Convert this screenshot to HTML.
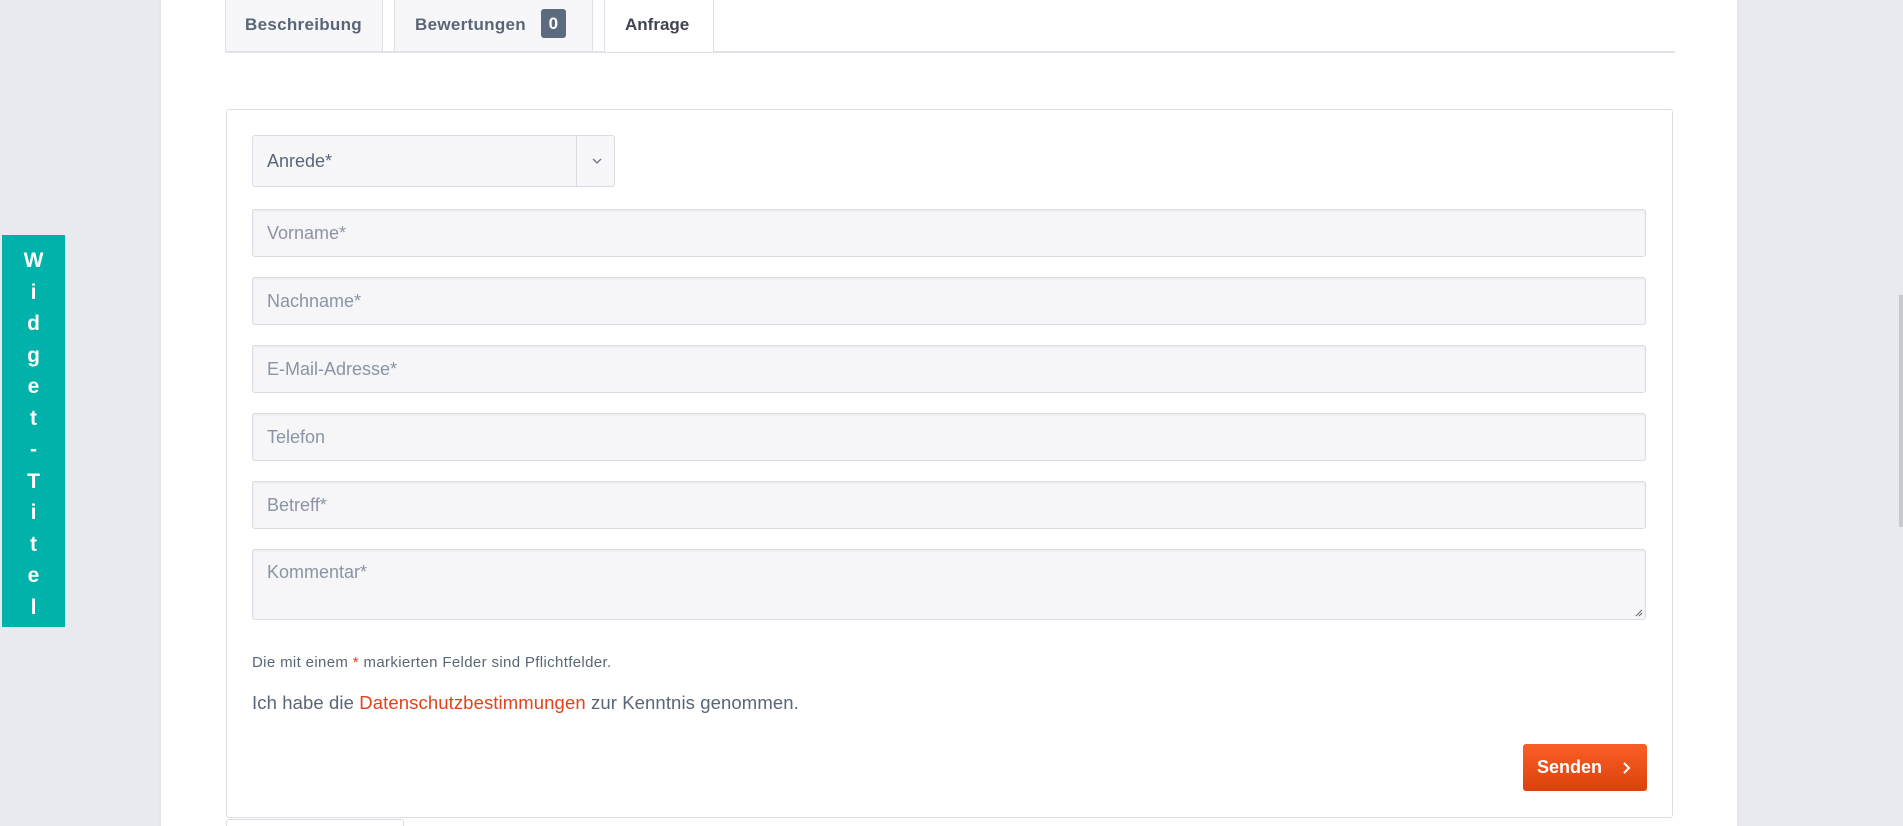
<!DOCTYPE html>
<html><head><meta charset="utf-8"><style>
*{box-sizing:border-box;margin:0;padding:0}
html,body{width:1903px;height:826px;overflow:hidden;background:#e9eaef}
body{font-family:"Liberation Sans",sans-serif;position:relative}
.panel{position:absolute;left:161px;top:-5px;width:1576px;height:840px;background:#fff;box-shadow:0 0 4px rgba(0,0,0,.06)}
.abs{position:absolute}
.tab{position:absolute;top:0;height:52px;background:#f7f7f9;border:1px solid #dfe0e6;border-top:none;font-weight:bold;font-size:17px;color:#5a6678;line-height:50px;padding-left:20px}
.inp{position:absolute;left:252px;width:1394px;height:48px;background:#f6f6f9;border:1px solid #dadbe3;border-radius:3px;color:#8a94a3;font-size:18px;line-height:46px;padding-left:14px;box-shadow:inset 0 1px 2px rgba(0,0,0,.05)}
</style></head><body>
<div class="panel"></div>
<div class="abs" style="left:1899px;top:295px;width:4px;height:232px;background:#c8c9cf"></div>
<div class="abs" style="left:2px;top:235px;width:63px;height:392px;background:#00b2a9;color:#fff;font-weight:bold;font-size:21px;text-align:center;line-height:31.5px;padding-top:10px">W<br>i<br>d<br>g<br>e<br>t<br>-<br>T<br>i<br>t<br>e<br>l</div>
<div class="abs" style="left:225px;top:51px;width:1450px;height:2px;background:#e2e3ea"></div>
<div class="tab" style="left:225px;width:158px;padding-left:19px;letter-spacing:0.3px">Beschreibung</div>
<div class="tab" style="left:394px;width:199px;padding-left:20px;letter-spacing:0.3px">Bewertungen <span style="display:inline-block;background:#5c6b7f;color:#fff;border-radius:3px;width:25px;height:29px;line-height:29px;text-align:center;margin-left:10px;vertical-align:1px">0</span></div>
<div class="tab" style="left:604px;width:110px;height:53px;background:#fff;color:#3e4450;padding-left:20px">Anfrage</div>
<div class="abs" style="left:226px;top:109px;width:1447px;height:709px;border:1px solid #dcdde5;border-radius:3px"></div>
<div class="abs" style="left:252px;top:135px;width:363px;height:52px;background:#f7f7f9;border:1px solid #dadbe3;border-radius:3px;font-size:18px;color:#5a6678;line-height:50px;padding-left:14px">Anrede*
<div class="abs" style="left:323px;top:0;width:1px;height:50px;background:#dadbe3"></div>
<svg class="abs" style="left:338px;top:20px" width="12" height="10"><path d="M2 3l4 4 4-4" fill="none" stroke="#6a7383" stroke-width="1.3"/></svg></div>
<div class="inp" style="top:209px">Vorname*</div>
<div class="inp" style="top:277px">Nachname*</div>
<div class="inp" style="top:345px">E-Mail-Adresse*</div>
<div class="inp" style="top:413px">Telefon</div>
<div class="inp" style="top:481px">Betreff*</div>
<div class="inp" style="top:549px;height:71px;line-height:44px">Kommentar*
<svg class="abs" style="right:2px;bottom:2px" width="8" height="8"><path d="M1 7L7 1M4 7L7 4" stroke="#666" stroke-width="1"/></svg></div>
<div class="abs" style="left:252px;top:654px;font-size:15px;letter-spacing:0.35px;color:#5a6678">Die mit einem <span style="color:#e2431c">*</span> markierten Felder sind Pflichtfelder.</div>
<div class="abs" style="left:252px;top:692px;font-size:18.5px;letter-spacing:0.1px;color:#5a6678">Ich habe die <span style="color:#e2431c">Datenschutzbestimmungen</span> zur Kenntnis genommen.</div>
<div class="abs" style="left:1523px;top:744px;width:124px;height:47px;border-radius:3px;background:linear-gradient(#f95f26,#dc410c);color:#fff;font-weight:bold;font-size:18px;line-height:47px;padding-left:14px">Senden
<svg class="abs" style="left:99px;top:17px" width="10" height="14"><path d="M2 2l5 5-5 5" fill="none" stroke="#fff" stroke-width="2"/></svg></div>
<div class="abs" style="left:226px;top:819px;width:178px;height:10px;border:1px solid #dcdde5;border-radius:3px"></div>
</body></html>
